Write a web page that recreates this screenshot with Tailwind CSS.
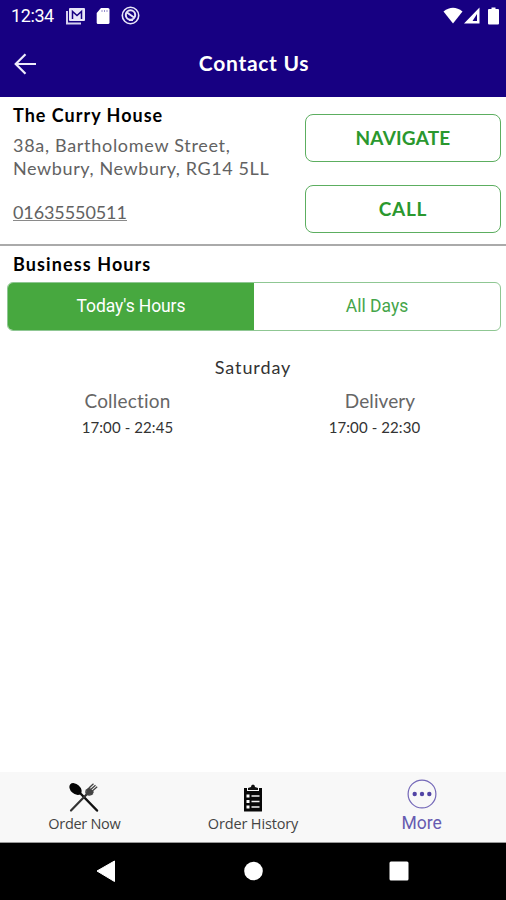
<!DOCTYPE html>
<html lang="en">
<head>
<meta charset="utf-8">
<title>Contact Us</title>
<script src="https://cdn.jsdelivr.net/npm/@tailwindcss/browser@4"></script>
</head>
<body class="bg-white">
<div class="w-[506px] h-[900px] flex flex-col overflow-hidden font-['Lato','Open_Sans',sans-serif] whitespace-nowrap">
  <header class="h-[97px] shrink-0 bg-[#170082] text-white flex flex-col">
    <div class="h-[31px] flex items-center justify-between pl-[11px] pr-[7px]">
      <div class="flex items-center">
        <span class="w-[55px] font-['Roboto',sans-serif] text-[18px] leading-[31px] tracking-[-0.4px]">12:34</span>
        <svg class="w-5 h-[18px]" viewBox="0 0 20 18"><path d="M1 4v12.500h14" fill="none" stroke="#d5d0ee" stroke-width="2"/><rect x="3" y="1" width="16" height="13" rx="1" fill="#e8e5f8"/><path d="M6.500 12V4.500l4.500 4 4.500-4V12" fill="none" stroke="#170082" stroke-width="1.500"/></svg>
        <svg class="w-3.5 h-[18px] ml-[10px]" viewBox="0 0 14 18"><path d="M5 1h7q1.500 0 1.500 1.500v13q0 1.500-1.500 1.500H2Q.7 17 .7 15.500V6z" fill="#fff"/><path d="M6 3v2M8.500 3v2M11 3v2" stroke="#8c83c8" stroke-width=".9"/></svg>
        <svg class="w-[19px] h-[19px] ml-[11px]" viewBox="0 0 19 19"><circle cx="9.500" cy="9.500" r="8.200" fill="none" stroke="#e8e5f8" stroke-width="1.600"/><circle cx="9.500" cy="9" r="4.700" fill="none" stroke="#e8e5f8" stroke-width="2"/><path d="M6 6.500l7 5M8 14h4" stroke="#e8e5f8" stroke-width="2"/></svg>
      </div>
      <div class="flex items-center">
        <svg class="w-5 h-[17px]" viewBox="0 0 20 17"><path d="M.5 4.500Q10-3 19.500 4.500L10 16.500z" fill="#fff"/></svg>
        <svg class="w-4 h-[17px] ml-px" viewBox="0 0 16 17"><path fill-rule="evenodd" d="M0 16.500L15.500.5v16zM8.500 14H13V7z" fill="#fff"/></svg>
        <svg class="w-[11px] h-[18px] ml-2" viewBox="0 0 11 18"><path d="M3.500.5h4V2H10q1 0 1 1v13.500q0 1-1 1H1q-1 0-1-1V3q0-1 1-1h2.500z" fill="#fff"/></svg>
      </div>
    </div>
    <div class="h-[65px] grid grid-cols-[1fr_auto_1fr] items-center">
      <svg class="w-[23px] h-[22px] ml-[14px]" viewBox="0 0 23 22"><path d="M22 11H2M11.500 1.200L1.700 11l9.800 9.800" fill="none" stroke="#eeecfb" stroke-width="2.200"/></svg>
      <h1 class="relative -top-px left-px text-[21px] font-bold tracking-[0.7px] leading-[26px]">Contact Us</h1>
    </div>
  </header>

  <section class="h-[149px] shrink-0 border-b-2 border-[#aaaaaa] flex justify-between pl-[13px] pr-[5px]">
    <div class="pt-[6px] text-[18px] text-[#626262]">
      <h2 class="font-bold text-black leading-6 tracking-[1px]">The Curry House</h2>
      <p class="mt-[7px] leading-[23px] tracking-[0.7px]">38a, Bartholomew Street,<br><span class="tracking-[0.6px]">Newbury, Newbury, RG14 5LL</span></p>
      <a class="mt-[22px] block w-max h-[19px] leading-[20px] tracking-[-0.1px] border-b border-[#8a8a8a]">01635550511</a>
    </div>
    <div class="pt-[17px] flex flex-col gap-[23px] text-[19px] font-bold text-[#2a982e]">
      <button class="w-[196px] h-[48px] rounded-[8px] border border-[#5cae60] tracking-[0.2px]">NAVIGATE</button>
      <button class="w-[196px] h-[48px] rounded-[8px] border border-[#5cae60] tracking-[0.7px]">CALL</button>
    </div>
  </section>

  <main class="flex-1 px-[7px] pt-[6px]">
    <h2 class="ml-[6px] text-[18px] leading-6 font-bold tracking-[1.1px]">Business Hours</h2>
    <div class="mt-[6px] mr-[-2px] h-[49px] rounded-[6px] border border-[#8fc793] overflow-hidden flex font-['Roboto',sans-serif] text-[17.500px]">
      <div class="flex-1 bg-[#47a83f] text-white flex items-center justify-center tracking-[-0.1px]">Today's Hours</div>
      <div class="flex-1 text-[#45a54a] flex items-center justify-center">All Days</div>
    </div>
    <div class="mt-[24px] text-center text-[18px] leading-6 tracking-[0.9px] text-[#333]">Saturday</div>
    <div class="mt-[10px] flex text-center">
      <div class="w-[241px]"><div class="text-[19px] leading-6 tracking-[0.2px] text-[#666]">Collection</div><div class="mt-[3px] text-[15px] leading-[22px] tracking-[0.1px] text-[#333]">17:00 - 22:45</div></div>
      <div class="flex-1"><div class="ml-[13px] text-[19px] leading-6 tracking-[0.1px] text-[#666]">Delivery</div><div class="mt-[3px] ml-[2px] text-[15px] leading-[22px] tracking-[0.1px] text-[#333]">17:00 - 22:30</div></div>
    </div>
  </main>

  <nav class="h-[71px] shrink-0 bg-[#f8f8f8] border-b border-[#999] grid grid-cols-3 text-center text-[14.500px] text-[#444] font-['Open_Sans',sans-serif]">
    <div class="flex flex-col items-center pt-[11px]">
      <svg class="w-[30px] h-[30px]" viewBox="0 0 30 30"><path d="M11 10l17 17.500" stroke="#111" stroke-width="2.500" stroke-linecap="round"/><ellipse cx="6.500" cy="6" rx="7" ry="4.800" transform="rotate(42 6.500 6)" fill="#050505"/><path d="M2 27.500L19 10" stroke="#333" stroke-width="2.200" stroke-linecap="round"/><path d="M17.500 7q2-1 4-3.500L24.500.8M20 8l6.500-5.800M21 10l7.200-6.200M17.500 6.500q-1.500 3 .5 5 3 1.500 6-1" stroke="#444" stroke-width="1.300" fill="none"/><path d="M18 6l3-1 4 4-2 2.500-4 .5-2-2z" fill="#444"/></svg>
      <span class="-mt-px leading-6 tracking-[-0.3px]">Order Now</span>
    </div>
    <div class="flex flex-col items-center pt-[12px]">
      <svg class="w-[18px] h-[28px]" viewBox="0 0 18 28"><path d="M0 4h3v3h12V4h3v23q0 .5-.5.500H.5Q0 27.500 0 27z" fill="#080808"/><path d="M4 6V4l3-1Q7 .5 9 .5T11 3l3 1v2z" fill="#111"/><path d="M2.500 10.500h3v3h-3zM2.500 16h3v3h-3zM2.500 21.500h3v3h-3z" fill="#fff"/><path d="M7.500 12h8M7.500 17.500h8M7.500 23h8" stroke="#f2f2f2" stroke-width="1.500"/></svg>
      <span class="leading-6 tracking-[-0.15px]">Order History</span>
    </div>
    <div class="flex flex-col items-center pt-[7px] text-[#665bb0] font-['Roboto',sans-serif]">
      <svg class="w-[30px] h-[30px]" viewBox="0 0 30 30"><circle cx="15" cy="15" r="13.900" fill="none" stroke="#7468b8" stroke-width="1.200"/><g fill="#5144a5"><circle cx="7.700" cy="15" r="2.200"/><circle cx="15" cy="15" r="2.200"/><circle cx="22.300" cy="15" r="2.200"/></g></svg>
      <span class="mt-[2px] text-[17.500px] leading-6">More</span>
    </div>
  </nav>
  <div class="h-[57px] shrink-0 bg-black">
    <svg class="w-full h-full" viewBox="0 0 506 57"><path d="M97 28l17.500-10v20.500z" fill="#fff" stroke="#fff" stroke-linejoin="round"/><circle cx="253.500" cy="28" r="9.300" fill="#fff"/><rect x="389.500" y="18.500" width="19" height="19" rx="1.500" fill="#fff"/></svg>
  </div>
</div>
</body>
</html>
